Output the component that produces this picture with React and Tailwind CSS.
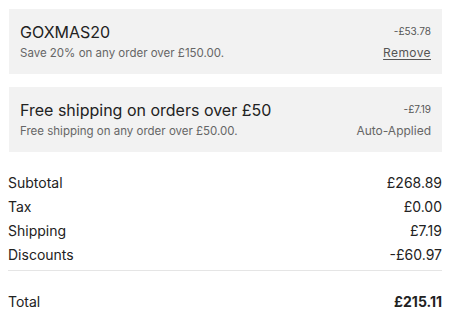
export default function App() {
  const rows = [
    ["Subtotal", "£268.89"],
    ["Tax", "£0.00"],
    ["Shipping", "£7.19"],
    ["Discounts", "-£60.97"],
  ];
  return (
    <div className="w-[449px] h-[319px] bg-white pl-[8px] pr-[7px] pt-[9px] text-[#222] font-['Inter',sans-serif]">
      <div className="ml-px bg-[#f2f2f2] h-[65px] px-[11px] flex flex-col justify-center">
        <div className="flex justify-between items-center">
          <span className="text-[16px] leading-[22px]">GOXMAS20</span>
          <span className="text-[10px] text-[#555]">-£53.78</span>
        </div>
        <div className="flex justify-between items-center">
          <span className="text-[11.5px] leading-[20px] text-[#666]">Save 20% on any order over £150.00.</span>
          <span className="text-[12px] text-[#555] tracking-[0.4px] underline underline-offset-2">Remove</span>
        </div>
      </div>
      <div className="ml-px mt-[13px] bg-[#f2f2f2] h-[65px] px-[11px] flex flex-col justify-center">
        <div className="flex justify-between items-center">
          <span className="text-[16px] leading-[22px]">Free shipping on orders over £50</span>
          <span className="text-[10px] text-[#555]">-£7.19</span>
        </div>
        <div className="flex justify-between items-center">
          <span className="text-[11.5px] leading-[20px] text-[#666]">Free shipping on any order over £50.00.</span>
          <span className="text-[12px] text-[#666]">Auto-Applied</span>
        </div>
      </div>
      <div className="mt-[19px]">
        {rows.map(([k, v]) => (
          <div key={k} className="flex justify-between text-[14px] leading-[24px]">
            <span>{k}</span>
            <span>{v}</span>
          </div>
        ))}
      </div>
      <div className="mt-[3px] border-t border-[#e5e5e5]" />
      <div className="mt-[19px] flex justify-between text-[14px] leading-[24px]">
        <span>Total</span>
        <span className="font-bold">£215.11</span>
      </div>
    </div>
  );
}
